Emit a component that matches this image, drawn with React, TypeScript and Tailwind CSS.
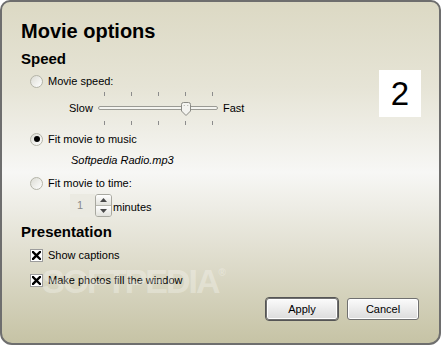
import React from 'react';

const FONT = "font-['Liberation_Sans',Arial,sans-serif]";

function Radio({ checked }: { checked?: boolean }) {
  return (
    <span className="w-[13px] h-[13px] rounded-full border border-[#b4b4a8] bg-gradient-to-br from-[#dcdcd4] to-white flex items-center justify-center shrink-0">
      {checked && <span className="w-[6px] h-[6px] rounded-full bg-black" />}
    </span>
  );
}

function Check() {
  return (
    <span className="w-[13px] h-[13px] border border-[#9c9c9c] bg-white flex items-center justify-center shrink-0">
      <svg width="9" height="9" viewBox="0 0 9 9">
        <path d="M1 1 L8 8 M8 1 L1 8" stroke="#000" strokeWidth="2.4" strokeLinecap="square" />
      </svg>
    </span>
  );
}

function Slider() {
  const ticks = [6, 33, 60, 87, 114];
  return (
    <svg width="122" height="36" viewBox="0 0 122 36" className="shrink-0">
      {ticks.map((x) => (
        <g key={x}>
          <line x1={x + 0.5} y1="2" x2={x + 0.5} y2="6" stroke="#8c8c8c" />
          <line x1={x + 0.5} y1="31" x2={x + 0.5} y2="35" stroke="#8c8c8c" />
        </g>
      ))}
      <rect x="0.5" y="16.5" width="119" height="3" rx="1.5" fill="#f4f4f0" stroke="#9a9a94" />
      <path
        d="M83.5 14.5 Q83.5 12.5 85.5 12.5 L90.5 12.5 Q92.5 12.5 92.5 14.5 L92.5 21 L88 25.5 L83.5 21 Z"
        fill="#f3f3ef"
        stroke="#8a8a84"
      />
      <line x1="86" y1="15" x2="86.5" y2="16" stroke="#b0b0a8" />
      <line x1="90" y1="15" x2="89.5" y2="16" stroke="#b0b0a8" />
    </svg>
  );
}

function Button({ label, primary }: { label: string; primary?: boolean }) {
  return (
    <div className={primary ? 'rounded-[4px] border border-[#555]' : 'rounded-[4px] border border-transparent'}>
      <div className="w-[72px] h-[22px] rounded-[3px] border border-[#707070] bg-gradient-to-b from-[#fbfbfb] to-[#dcdcdc] shadow-[inset_0_0_0_1px_#ffffff] flex items-center justify-center text-[11px] text-black">
        {label}
      </div>
    </div>
  );
}

export default function App() {
  return (
    <div className={`w-[441px] h-[345px] bg-white ${FONT}`}>
      <div className="relative w-[441px] h-[345px] rounded-t-[10px] rounded-b-[12px] border-2 border-[#6e6e6e] bg-[linear-gradient(to_bottom,#dcd9c4_0%,#e6e4d6_25%,#f7f7f5_50%,#e2e0d2_72%,#c6c3a5_100%)] flex flex-col pl-[19px] pt-[15px] text-black overflow-hidden">
        <div className="h-[28px] text-[20px] leading-[28px] font-bold">Movie options</div>
        <div className="mt-[4px] h-[20px] text-[15px] leading-[20px] font-bold">Speed</div>

        <div className="mt-[4px] h-[16px] ml-[9px] flex items-center gap-[5px] text-[11px]">
          <Radio />
          <span>Movie speed:</span>
        </div>

        <div className="mt-[1px] ml-[48px] flex items-center text-[11px]">
          <span className="w-[29px]">Slow</span>
          <Slider />
          <span className="ml-[3px]">Fast</span>
        </div>

        <div className="mt-[5px] h-[16px] ml-[9px] flex items-center gap-[5px] text-[11px]">
          <Radio checked />
          <span>Fit movie to music</span>
        </div>

        <div className="mt-[5px] h-[16px] ml-[50px] flex items-center text-[11px] italic">
          Softpedia Radio.mp3
        </div>

        <div className="mt-[7px] h-[16px] ml-[9px] flex items-center gap-[5px] text-[11px]">
          <Radio />
          <span>Fit movie to time:</span>
        </div>

        <div className="mt-[3px] h-[23px] ml-[49px] flex items-center text-[11px]">
          <div className="w-[25px] h-[23px] bg-[#ebeae2] text-[#8a8a8a] flex items-center pl-[7px]">1</div>
          <div className="w-[17px] h-[23px] flex flex-col rounded-[3px] border border-[#a8a8a0] bg-[#f0f0ea] overflow-hidden">
            <div className="flex-1 flex items-center justify-center border-b border-[#b8b8b0] bg-gradient-to-b from-white to-[#e2e2dc]">
              <svg width="7" height="4" viewBox="0 0 7 4"><path d="M0 4 L3.5 0 L7 4 Z" fill="#4a4a4a" /></svg>
            </div>
            <div className="flex-1 flex items-center justify-center bg-gradient-to-b from-white to-[#e2e2dc]">
              <svg width="7" height="4" viewBox="0 0 7 4"><path d="M0 0 L3.5 4 L7 0 Z" fill="#4a4a4a" /></svg>
            </div>
          </div>
          <span className="ml-[1px] pt-[3px]">minutes</span>
        </div>

        <div className="mt-[5px] h-[20px] text-[15px] leading-[20px] font-bold">Presentation</div>

        <div className="mt-[5px] h-[16px] ml-[9px] flex items-center gap-[5px] text-[11px]">
          <Check />
          <span>Show captions</span>
        </div>
        <div className="mt-[9px] h-[16px] ml-[9px] flex items-center gap-[5px] text-[11px]">
          <Check />
          <span>Make photos fill the window</span>
        </div>

        <div className="mt-[9px] flex justify-end gap-[7px] pr-[19px]">
          <Button label="Apply" primary />
          <Button label="Cancel" />
        </div>

        <div className="absolute left-[377px] top-[68px] w-[42px] h-[47px] bg-white flex items-center justify-center text-[33px] leading-none">
          2
        </div>

        <div className="pointer-events-none absolute left-[40px] top-[254px] text-[34px] font-bold tracking-[-2px] text-white/30">
          SOFTPEDIA<sup className="text-[10px] align-super">®</sup>
        </div>
      </div>
    </div>
  );
}
